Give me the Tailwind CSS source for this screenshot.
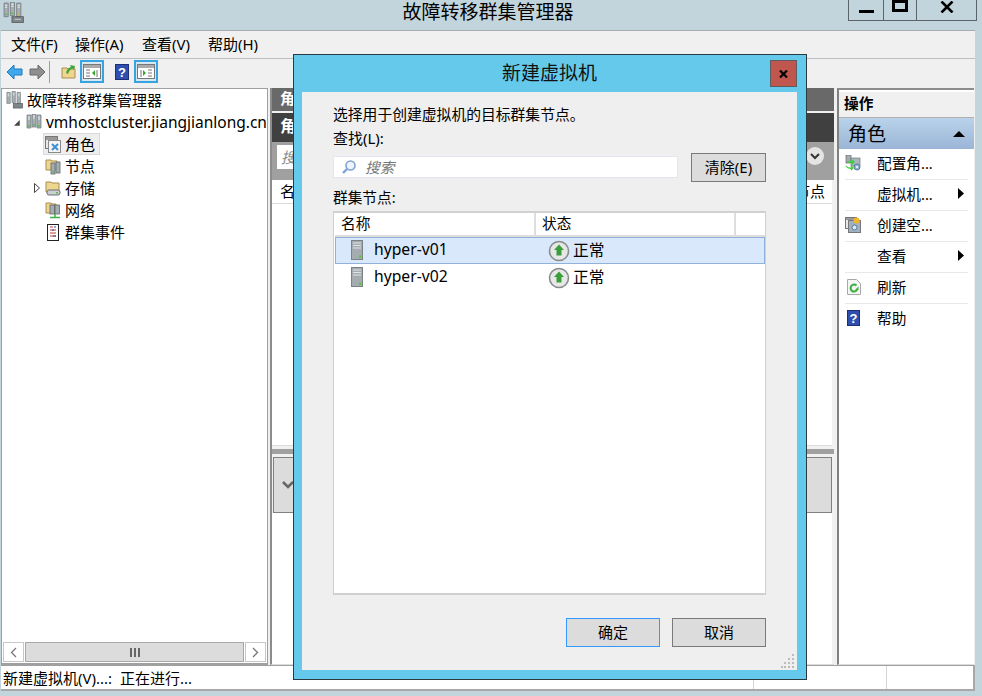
<!DOCTYPE html>
<html lang="zh-CN">
<head>
<meta charset="UTF-8">
<title>故障转移群集管理器</title>
<script src="https://cdn.jsdelivr.net/npm/@tailwindcss/browser@4"></script>
</head>
<body class="relative w-[982px] h-[696px] overflow-hidden bg-[#c3d5dc] text-black font-['Noto_Sans','Noto_Sans_CJK_SC',sans-serif] text-[15px]">

<div class="flex flex-col h-[696px]">
  <!-- title bar -->
  <div class="flex h-[30px] shrink-0 relative">
    <svg class="ml-[3px] mt-[2px]" width="21" height="21" viewBox="0 0 20 20"><path d="M1 1h4v13H1zM7 0h4v13H7zM13 1h4v13h-4z" fill="#a7afb3" stroke="#6c7478" stroke-width=".7"/><path d="M2 3h2M2 5h2M8 2h2M8 4h2M14 3h2M14 5h2" stroke="#eef1f2"/><rect x="2" y="11" width="1.500" height="1.500" fill="#45c03a"/><rect x="8" y="10" width="1.500" height="1.500" fill="#45c03a"/><rect x="14" y="11" width="1.500" height="1.500" fill="#e0b030"/><rect x="8.500" y="14" width="11" height="5.500" fill="#7d8589" stroke="#4d5356" stroke-width=".7"/><path d="M11 16.500h6" stroke="#c5cbce"/></svg>
    <div class="absolute left-[402px] top-[-1px] w-[172px] text-center text-[19px] leading-[26px] whitespace-nowrap">故障转移群集管理器</div>
    <div class="ml-auto mr-[5px] flex h-[21px] w-[129px] border border-t-0 border-[#5c6469]">
      <div class="w-[35px] flex justify-center border-r border-[#5c6469]"><div class="mt-[10px] w-[15px] h-[3px] bg-black"></div></div>
      <div class="w-[33px] flex justify-center border-r border-[#5c6469]"><div class="mt-0 w-[16px] h-[12px] border-[3px] border-black"></div></div>
      <div class="flex-1 flex justify-center"><svg class="mt-[1px]" width="14" height="12" viewBox="0 0 14 12"><path d="M1.500 0.500 L12.500 11.500 M12.500 0.500 L1.500 11.500" stroke="#000" stroke-width="2.600"/></svg></div>
    </div>
  </div>

  <!-- client area -->
  <div class="ml-[1px] w-[974px] h-[661px] flex flex-col bg-[#f0f0f0] border-t border-[#a3acb0]">
    <!-- menu -->
    <div class="h-[26px] shrink-0 flex items-center pl-[10px] pb-[1px] border-b border-[#b9bec1] box-content text-[15px] leading-none">
      <span class="w-[64px]">文件(F)</span>
      <span class="w-[67px]">操作(A)</span>
      <span class="w-[66px]">查看(V)</span>
      <span>帮助(H)</span>
    </div>
    <!-- toolbar -->
    <div class="h-[29px] shrink-0 flex items-center pl-[5px] pb-[4px]">
      <svg width="17" height="16" viewBox="0 0 17 16"><path d="M8 1 L1 8 L8 15 V11 H16 V5 H8 Z" fill="#3fa9ee" stroke="#1a78c2"/></svg>
      <svg class="ml-[6px]" width="17" height="16" viewBox="0 0 17 16"><path d="M9 1 L16 8 L9 15 V11 H1 V5 H9 Z" fill="#8f8f8f" stroke="#6a6a6a"/></svg>
      <div class="ml-[3px] w-px h-[22px] bg-[#a0a0a0]"></div>
      <svg class="ml-[11px]" width="15" height="15" viewBox="0 0 15 15"><path d="M1 4 H6 L7 5 H14 V14 H1 Z" fill="#efd68f" stroke="#a88d4e"/><path d="M5 9 Q6 4 10 3 L9 1 L14 2 L13 6 L11.500 4.500 Q8 6 7 10 Z" fill="#3da63a"/></svg>
      <div class="ml-[4px] w-[24px] h-[23px] border-2 border-[#37a3e0] bg-[#d7e8f3] flex items-center justify-center">
        <svg width="18" height="15" viewBox="0 0 18 15"><rect x=".5" y=".5" width="17" height="14" fill="#fff" stroke="#777"/><rect x="1" y="1" width="16" height="3" fill="#aaa"/><path d="M3 6h4M3 9h4M3 12h4M14 6v7" stroke="#777"/><path d="M12 6 L9 9 L12 12 Z" fill="#36a82e"/></svg>
      </div>
      <svg class="ml-[11px]" width="14" height="16" viewBox="0 0 14 16"><rect x=".5" y=".5" width="13" height="15" fill="#2f4fae" stroke="#1d2f7a"/><text x="7" y="13" text-anchor="middle" font-size="13" font-weight="700" fill="#fff" font-family="Liberation Sans">?</text></svg>
      <div class="ml-[5px] w-[24px] h-[23px] border-2 border-[#37a3e0] bg-[#d7e8f3] flex items-center justify-center">
        <svg width="18" height="15" viewBox="0 0 18 15"><rect x=".5" y=".5" width="17" height="14" fill="#fff" stroke="#777"/><rect x="1" y="1" width="16" height="3" fill="#aaa"/><path d="M11 6h4M11 9h4M11 12h4M4 6v7" stroke="#777"/><path d="M6 6 L9 9 L6 12 Z" fill="#36a82e"/></svg>
      </div>
    </div>

    <!-- panes -->
    <div class="flex h-[577px] shrink-0">
      <!-- tree pane -->
      <div class="w-[267px] shrink-0 flex flex-col bg-white border border-[#a0a0a0] border-b-2">
        <div class="flex-1 pl-[4px] overflow-hidden leading-[22px]">
          <div class="flex items-center h-[22px] whitespace-nowrap">
            <svg width="17" height="18" viewBox="0 0 20 20"><path d="M1 1h4v13H1zM7 0h4v13H7zM13 1h4v13h-4z" fill="#a7afb3" stroke="#6c7478" stroke-width=".7"/><path d="M2 3h2M2 5h2M8 2h2M8 4h2M14 3h2M14 5h2" stroke="#eef1f2"/><rect x="8.500" y="14" width="11" height="5.500" fill="#7d8589" stroke="#4d5356" stroke-width=".7"/></svg>
            <span class="ml-[4px]">故障转移群集管理器</span>
          </div>
          <div class="flex items-center h-[22px] whitespace-nowrap pl-[8px] mt-[1px]">
            <svg width="6" height="6" viewBox="0 0 6 6"><path d="M5.500 .5 V5.500 H.5 Z" fill="#444" stroke="#444" stroke-width=".5"/></svg>
            <svg class="ml-[6px]" width="16" height="18" viewBox="0 0 16 18"><path d="M1 1h4v13H1zM6 0h4v13H6zM11 1h4v13h-4z" fill="#a7afb3" stroke="#6c7478" stroke-width=".7"/><path d="M2 3h2M2 5h2M7 2h2M7 4h2M12 3h2M12 5h2" stroke="#eef1f2"/><rect x="2" y="11" width="1.500" height="1.500" fill="#45c03a"/><rect x="7" y="10" width="1.500" height="1.500" fill="#45c03a"/><rect x="12" y="11" width="1.500" height="1.500" fill="#45c03a"/></svg>
            <span class="ml-[4px] text-[15.5px] leading-none">vmhostcluster.jiangjianlong.cn</span>
          </div>
          <div class="pl-[37px]">
            <div class="flex items-center h-[22px] w-[57px] mt-[-1px] bg-[#eee] border border-[#d9d9d9] pl-[1px]">
              <svg width="17" height="17" viewBox="0 0 17 17"><rect x=".5" y=".5" width="12" height="12" fill="#e6e9eb" stroke="#777"/><rect x="1" y="1" width="11" height="3" fill="#999"/><rect x="3.500" y="4.500" width="12" height="12" fill="#f4f4f4" stroke="#8a8a8a"/><path d="M7 8 L13 14 M13 8 L7 14" stroke="#3d8fd6" stroke-width="2"/></svg>
              <span class="ml-[3px]">角色</span>
            </div>
            <div class="flex items-center h-[22px] pl-[2px]">
              <svg width="16" height="17" viewBox="0 0 16 17"><path d="M1 2 H6 L7 3 H12 V12 H1 Z" fill="#efd68f" stroke="#a88d4e"/><rect x="6" y="5" width="4" height="11" fill="#a4adb1" stroke="#5f6669" stroke-width=".8"/><rect x="11" y="4" width="4" height="11" fill="#a4adb1" stroke="#5f6669" stroke-width=".8"/><rect x="7.500" y="13" width="1.500" height="1.500" fill="#4fc03f"/></svg>
              <span class="ml-[4px]">节点</span>
            </div>
            <div class="flex items-center h-[22px] pl-[2px] relative">
              <svg class="absolute left-[-9px] top-[6px]" width="6" height="10" viewBox="0 0 6 10"><path d="M.5 .5 L5.500 5 L.5 9.500 Z" fill="#fff" stroke="#444"/></svg>
              <svg width="16" height="17" viewBox="0 0 16 17"><path d="M1 2 H6 L7 3 H14 V12 H1 Z" fill="#efd68f" stroke="#a88d4e"/><rect x="2" y="10" width="13" height="5" rx="2" fill="#ccd0d2" stroke="#6a7073"/><rect x="11" y="12" width="2" height="1.500" fill="#4fc03f"/></svg>
              <span class="ml-[4px]">存储</span>
            </div>
            <div class="flex items-center h-[22px] pl-[2px]">
              <svg width="16" height="17" viewBox="0 0 16 17"><path d="M1 1 H6 L7 2 H11 V11 H1 Z" fill="#efd68f" stroke="#a88d4e"/><rect x="5" y="3" width="4.500" height="9" fill="#a4adb1" stroke="#5f6669" stroke-width=".8"/><rect x="10" y="3" width="4.500" height="9" fill="#a4adb1" stroke="#5f6669" stroke-width=".8"/><path d="M10 12 V15 M5 15.500 H15" stroke="#3fb04a" stroke-width="1.500"/></svg>
              <span class="ml-[4px]">网络</span>
            </div>
            <div class="flex items-center h-[22px] pl-[2px]">
              <svg width="16" height="17" viewBox="0 0 16 17"><rect x="2.500" y=".5" width="11" height="16" fill="#fff" stroke="#222"/><path d="M5 3h3M5 6h6M5 9h6M5 12h6" stroke="#c0392b"/><path d="M9 3h2M7 6h2M8 12h3" stroke="#3048c0"/></svg>
              <span class="ml-[4px]">群集事件</span>
            </div>
          </div>
        </div>
        <!-- h scrollbar -->
        <div class="h-[20px] mx-[1px] mb-[1px] flex gap-px">
          <div class="w-[21px] border border-[#c8c8c8] flex items-center justify-center"><svg width="7" height="11" viewBox="0 0 7 11"><path d="M6 1 L1.500 5.500 L6 10" fill="none" stroke="#777" stroke-width="1.300"/></svg></div>
          <div class="flex-1 bg-[#dcdcdc] border border-[#a8a8a8] flex items-center justify-center gap-[2px]"><i class="block w-[2px] h-[9px] bg-[#666]"></i><i class="block w-[2px] h-[9px] bg-[#666]"></i><i class="block w-[2px] h-[9px] bg-[#666]"></i></div>
          <div class="w-[21px] border border-[#c8c8c8] flex items-center justify-center"><svg width="7" height="11" viewBox="0 0 7 11"><path d="M1 1 L5.500 5.500 L1 10" fill="none" stroke="#777" stroke-width="1.300"/></svg></div>
        </div>
      </div>

      <!-- center pane -->
      <div class="ml-[2px] w-[564px] shrink-0 flex flex-col border-l-2 border-[#8c8c8c] border-b border-b-[#dcdcdc]">
        <div class="h-[23px] shrink-0 bg-[#696969] text-white font-bold pl-[8px] leading-[21px] mb-[2px]">角</div>
        <div class="h-[29px] shrink-0 bg-[#404040] text-white font-bold pl-[8px] text-[16px] leading-[27px]">角</div>
        <div class="h-[38px] shrink-0 bg-[#a0a0a0] flex items-start pt-[3px] pl-[5px] pr-[10px]">
          <div class="w-[300px] h-[24px] bg-white italic text-[#888] pl-[4px] leading-[24px]">搜</div>
          <div class="ml-auto mt-[2px] w-[18px] h-[18px] rounded-full bg-[#e4e4e4] flex items-center justify-center"><svg width="10" height="7" viewBox="0 0 10 7"><path d="M1 1 L5 5 L9 1" fill="none" stroke="#333" stroke-width="2"/></svg></div>
        </div>
        <div class="h-[24px] shrink-0 bg-white border-b border-[#dcdcdc] mr-[2px] flex items-center justify-between pl-[8px] pr-[7px]"><span>名</span><span>节点</span></div>
        <div class="h-[242px] shrink-0 bg-white mr-[2px] border-b border-[#dcdcdc]"></div>
        <div class="h-[5px] shrink-0 bg-[#a0a0a0] mt-[3px]"></div>
        <div class="h-[56px] shrink-0 mt-[3px] ml-[1px] mr-[2px] bg-[#dcdcdc] border border-[#808080] flex items-center pl-[8px]">
          <svg width="12" height="8" viewBox="0 0 12 8"><path d="M1 1 L6 6 L11 1" fill="none" stroke="#666" stroke-width="2.500"/></svg>
        </div>
        <div class="flex-1 bg-white mr-[2px]"></div>
      </div>

      <!-- actions pane -->
      <div class="ml-[3px] flex-1 flex flex-col bg-white border-l-2 border-[#808080] border-t-2 border-t-[#8c8c8c] border-b border-b-[#dcdcdc] mr-[1px]">
        <div class="h-[26px] shrink-0 bg-[#f0f0f0] border-b border-[#b0b0b0] font-bold text-[14.67px] pl-[5px] leading-[23px] mt-[2px]">操作</div>
        <div class="h-[31px] shrink-0 flex items-center justify-between pl-[9px] pr-[9px] bg-gradient-to-b from-[#bad3eb] to-[#9ab5d6] text-[19px] leading-none">
          <span class="mt-[2px]">角色</span>
          <svg width="12" height="6" viewBox="0 0 12 6"><path d="M0 6 L6 0 L12 6 Z" fill="#000"/></svg>
        </div>
        <div class="text-[14.67px] px-[6px]">
          <div class="h-[31px] flex items-center pb-[3px] border-b border-[#e8e8e8]">
            <svg width="16" height="16" viewBox="0 0 16 16"><rect x="1" y="0" width="5" height="8" fill="#a4adb1" stroke="#666" stroke-width=".7"/><rect x="6" y="3" width="9" height="8" fill="#a9b6c2" stroke="#777" stroke-width=".7"/><path d="M1 11 Q3 14 8 13 M6 11 L8 13 L6 15 M2 7 H9 M7 5 L9 7 L7 9" stroke="#3ccf3a" stroke-width="1.300" fill="none"/><circle cx="12" cy="12" r="3" fill="#8db4d6" stroke="#5d7a96"/><circle cx="12" cy="12" r="1" fill="#fff"/></svg>
            <span class="ml-[16px]">配置角...</span>
          </div>
          <div class="h-[31px] flex items-center pb-[3px] border-b border-[#e8e8e8] pl-[32px]">
            <span>虚拟机...</span>
            <svg class="ml-auto mr-[4px]" width="6" height="11" viewBox="0 0 6 11"><path d="M0 0 L6 5.500 L0 11 Z" fill="#000"/></svg>
          </div>
          <div class="h-[31px] flex items-center pb-[3px] border-b border-[#e8e8e8]">
            <svg width="16" height="16" viewBox="0 0 16 16"><rect x=".5" y=".5" width="11" height="11" fill="#e6e9eb" stroke="#777"/><rect x="1" y="1" width="10" height="2" fill="#999"/><rect x="3.500" y="3.500" width="12" height="12" fill="#9fb2c4" stroke="#777"/><circle cx="11.500" cy="3.500" r="3" fill="#f3b32a"/><circle cx="9.500" cy="10.500" r="2.500" fill="#dbe7f2" stroke="#5d7a96"/></svg>
            <span class="ml-[16px]">创建空...</span>
          </div>
          <div class="h-[31px] flex items-center pb-[3px] border-b border-[#e8e8e8] pl-[32px]">
            <span>查看</span>
            <svg class="ml-auto mr-[4px]" width="6" height="11" viewBox="0 0 6 11"><path d="M0 0 L6 5.500 L0 11 Z" fill="#000"/></svg>
          </div>
          <div class="h-[31px] flex items-center pb-[3px] border-b border-[#e8e8e8]">
            <svg class="ml-[2px]" width="14" height="16" viewBox="0 0 14 16"><path d="M.5 .5 H9.500 L13.500 4.500 V15.500 H.5 Z" fill="#f4f5f5" stroke="#a8a8a8"/><path d="M10 11 A3.500 3.500 0 1 1 9.500 6.500" fill="none" stroke="#3cae3a" stroke-width="2"/><path d="M8 11 H11.500 V7.500 Z" fill="#3cae3a"/></svg>
            <span class="ml-[16px]">刷新</span>
          </div>
          <div class="h-[31px] flex items-center pb-[3px]">
            <svg class="ml-[2px]" width="13" height="16" viewBox="0 0 13 16"><rect x=".5" y=".5" width="12" height="15" fill="#2f4fae" stroke="#1d2f7a"/><text x="6.500" y="13" text-anchor="middle" font-size="13" font-weight="700" fill="#fff" font-family="Liberation Sans">?</text></svg>
            <span class="ml-[17px]">帮助</span>
          </div>
        </div>
      </div>
    </div>

    <!-- status bar -->
    <div class="h-[26px] shrink-0 flex bg-white border-t border-[#a0a0a0] border-b-2 border-b-[#a8a8a8] border-r-2 border-r-[#a8a8a8] text-[15px] leading-[25px] pl-[2px] whitespace-nowrap">
      <span class="w-[751px] border-r border-[#d4d4d4]">新建虚拟机(V)...:&nbsp;&nbsp;正在进行...</span>
      <span class="w-[133px] border-r border-[#d4d4d4]"></span>
    </div>
  </div>
</div>

<!-- dialog -->
<div class="absolute left-[293px] top-[54px] w-[514px] h-[626px] bg-[#64c9ea] border border-[#2b3a40] flex flex-col">
  <div class="h-[37px] shrink-0 flex relative">
    <div class="absolute left-0 right-0 top-[6px] pr-[1px] text-center text-[19px] leading-[24px] text-[#111]">新建虚拟机</div>
    <div class="absolute left-[476px] top-[5px] w-[27px] h-[27px] bg-[#c0574f] border border-[#5d5d5d] flex items-center justify-center">
      <svg width="9" height="8" viewBox="0 0 9 8"><path d="M1 .5 L8 7.500 M8 .5 L1 7.500" stroke="#000" stroke-width="2.200"/></svg>
    </div>
  </div>
  <div class="ml-[8px] mr-[9px] h-[578px] bg-[#efefef] pl-[31px] pr-[31px] flex flex-col text-[14.67px] relative">
    <div class="mt-[12px] h-[20px] leading-[20px] text-[14.8px]">选择用于创建虚拟机的目标群集节点。</div>
    <div class="mt-[4px] h-[20px] leading-[20px] text-[15px]">查找(L):</div>
    <div class="flex mt-[5px] h-[29px]">
      <div class="mt-[3px] w-[345px] h-[22px] bg-white border border-[#e3e6ee] flex items-center pl-[7px] pb-[1px] text-[#777] italic">
        <svg width="16" height="16" viewBox="0 0 16 16"><circle cx="9.500" cy="6.500" r="4.500" fill="#eef4fb" stroke="#7ea3d3" stroke-width="1.600"/><path d="M6 10 L2 14" stroke="#7ea3d3" stroke-width="2.400"/></svg>
        <span class="ml-[8px]">搜索</span>
      </div>
      <div class="ml-[13px] w-[75px] h-[29px] bg-[#dcdcdc] border border-[#7a7a7a] flex items-center justify-center text-[15px]">清除(E)</div>
    </div>
    <div class="mt-[5px] h-[20px] leading-[20px]">群集节点:</div>
    <div class="mt-[4px] h-[384px] bg-white border-2 border-[#d0d0d0] border-l border-r flex flex-col">
      <div class="h-[24px] shrink-0 flex border-b-2 border-[#dedede] ml-px leading-[20px]">
        <div class="w-[201px] pl-[6px] border-r-2 border-[#dedede]">名称</div>
        <div class="w-[200px] pl-[6px] border-r-2 border-[#dedede]">状态</div>
        <div class="flex-1"></div>
      </div>
      <div class="h-[27px] shrink-0 flex items-center ml-px pb-[1px] bg-[#d9e9fb] border border-[#8fb1dc] text-[15.7px]">
        <svg class="ml-[15px]" width="12" height="20" viewBox="0 0 12 20"><rect x=".5" y=".5" width="11" height="19" fill="#a5acb0" stroke="#7b8286"/><path d="M2 3h8M2 5.500h8M2 8h8" stroke="#dfe3e5"/><rect x="8" y="15.500" width="2.500" height="2.500" fill="#55cc40"/></svg>
        <span class="ml-[11px] w-[174px]">hyper-v01</span>
        <svg width="22" height="22" class="mt-[1px]" viewBox="0 0 22 22"><circle cx="11" cy="11" r="9.500" fill="#e6e8e8" stroke="#8a8a8a" stroke-width="1.600"/><path d="M11 4.500 L16 10 H13.500 V15.500 H8.500 V10 H6 Z" fill="#3a9d3a"/></svg>
        <span class="ml-[3px] mt-[1px]">正常</span>
      </div>
      <div class="h-[27px] shrink-0 flex items-center ml-px px-px pb-[1px] text-[15.7px]">
        <svg class="ml-[15px]" width="12" height="20" viewBox="0 0 12 20"><rect x=".5" y=".5" width="11" height="19" fill="#a5acb0" stroke="#7b8286"/><path d="M2 3h8M2 5.500h8M2 8h8" stroke="#dfe3e5"/><rect x="8" y="15.500" width="2.500" height="2.500" fill="#55cc40"/></svg>
        <span class="ml-[11px] w-[174px]">hyper-v02</span>
        <svg width="22" height="22" class="mt-[1px]" viewBox="0 0 22 22"><circle cx="11" cy="11" r="9.500" fill="#e6e8e8" stroke="#8a8a8a" stroke-width="1.600"/><path d="M11 4.500 L16 10 H13.500 V15.500 H8.500 V10 H6 Z" fill="#3a9d3a"/></svg>
        <span class="ml-[3px] mt-[1px]">正常</span>
      </div>
    </div>
    <div class="mt-[23px] flex justify-end gap-[12px] text-[15px]">
      <div class="w-[94px] h-[29px] bg-[#dcdcdc] border border-[#3399ff] flex items-center justify-center">确定</div>
      <div class="w-[94px] h-[29px] bg-[#dcdcdc] border border-[#7a7a7a] flex items-center justify-center">取消</div>
    </div>
    <svg class="absolute right-[2px] bottom-[2px]" width="14" height="14" viewBox="0 0 14 14" fill="#bcbcbc"><rect x="11" y="0" width="2" height="2"/><rect x="11" y="4" width="2" height="2"/><rect x="7" y="4" width="2" height="2"/><rect x="11" y="8" width="2" height="2"/><rect x="7" y="8" width="2" height="2"/><rect x="3" y="8" width="2" height="2"/><rect x="11" y="12" width="2" height="2"/><rect x="7" y="12" width="2" height="2"/><rect x="3" y="12" width="2" height="2"/><rect x="0" y="12" width="2" height="2"/></svg>
  </div>
</div>
</body>
</html>
